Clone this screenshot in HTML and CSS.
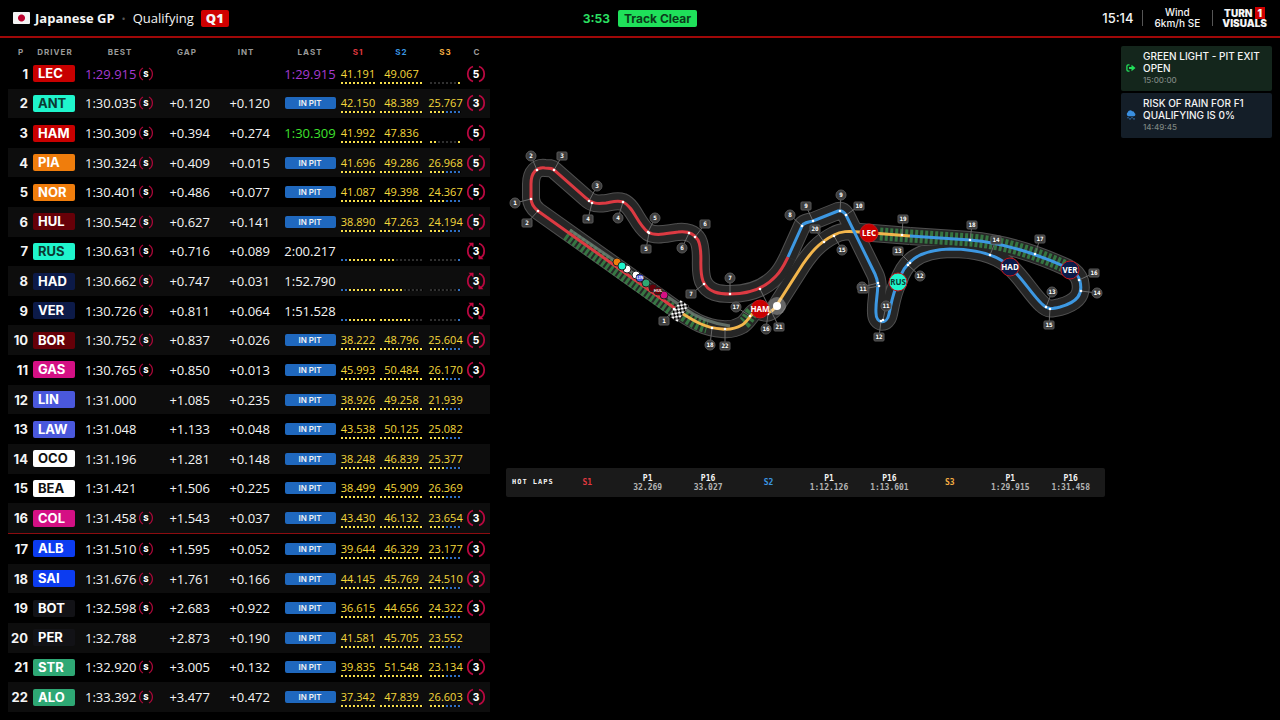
FILE: index.html
```
<!DOCTYPE html>
<html lang="en">
  <head>
    <meta charset="UTF-8" />
    <meta name="viewport" content="width=device-width, initial-scale=1.0" />
    <title>Japanese GP - Qualifying</title>
    <link rel="stylesheet" href="styles.css">
  </head>
  <body>
    <header class="topbar">
      <div class="session">
        <span class="flag"></span>
        <h1>Japanese GP</h1>
        <span class="dot">•</span>
        <span class="session-name">Qualifying</span>
        <span class="segment">Q1</span>
      </div>
      <div class="track-status">
        <span class="clock">3:53</span>
        <span class="status">Track Clear</span>
      </div>
      <div class="info">
        <span class="local-time">15:14</span>
        <div class="wind"><span>Wind</span><span>6km/h SE</span></div>
        <div class="logo">
          <span>TURN <b>1</b></span>
          <span>VISUALS</span>
        </div>
      </div>
    </header>

    <div class="layout">
      <table class="timing">
        <colgroup>
          <col class="col-pos"><col class="col-driver"><col class="col-best">
          <col class="col-gap"><col class="col-int"><col class="col-last">
          <col class="col-s1"><col class="col-s2"><col class="col-s3"><col class="col-tyre">
        </colgroup>
        <thead>
          <tr>
            <th class="pos">P</th>
            <th>DRIVER</th>
            <th>BEST</th>
            <th>GAP</th>
            <th>INT</th>
            <th class="last">LAST</th>
            <th class="s1">S1</th>
            <th class="s2">S2</th>
            <th class="s3">S3</th>
            <th class="tyre">C</th>
          </tr>
        </thead>
        <tbody id="timing-rows"></tbody>
      </table>

      <main class="center">
        <svg class="map" viewBox="506 46 599 422" role="img" aria-label="Track map">
          <defs>
            <pattern id="checker" width="5" height="5" patternUnits="userSpaceOnUse">
              <rect width="5" height="5" fill="#000" />
              <rect width="2.5" height="2.5" fill="#fff" />
              <rect x="2.5" y="2.5" width="2.5" height="2.5" fill="#fff" />
            </pattern>
            <path id="sector1" d="M680 312 L538 211 C533 207 531 203 531 198 V184 C531 172 537 167 545 168 C549 168 552 168 554 170 L586 198 C592 204 598 204 606 203 C612 202 617 200 623 202 C634 207 637 224 648 232 C656 237 668 233 678 232 C686 231 694 233 698 240 C704 252 698 268 703 281 C708 293 720 294 730 294 C750 294 765 288 776 276 C782 270 785 263 788 257" />
            <path id="sector2" d="M788 257 L802 226 C803 223 808 222 813 221 L838 211 C842 210 844 212 846 215 L875 274 C881 286 875 298 876 313 C876 324 887 325 889 314 C892 300 893 292 898 283 C904 262 918 250 950 249 C975 249 995 254 1008 265 C1022 277 1032 295 1042 304 C1048 310 1052 309 1060 307 C1078 302 1083 294 1080 281 C1078 274 1072 270 1068 268 C1035 253 1005 243 970 240 L910 236" />
            <path id="sector3" d="M910 236 L860 232 C848 231 841 231 834 235 C818 243 810 254 803 264 L780 300 C775 309 770 316 760 311 C752 309 750 320 742 325 C735 329 730 330 722 329 C705 328 694 321 680 312" />
          </defs>
          <g class="road-edge">
            <use href="#sector1" /><use href="#sector2" /><use href="#sector3" />
          </g>
          <g class="road">
            <use href="#sector1" /><use href="#sector2" /><use href="#sector3" />
          </g>
          <g class="drs">
            <path d="M567 234 L674 311" />
            <path d="M684 315 C692 321 699 325 707 327" />
            <path d="M744 323 C750 318 750 309 760 310" />
            <path d="M880 234 L970 240 C1005 243 1035 253 1064 266" />
          </g>
          <g class="pit-lane">
            <path d="M570 230 L684 308 C697 318 710 323 730 326" />
          </g>
          <g class="racing-line">
            <use class="line-s1" href="#sector1" />
            <use class="line-s3" href="#sector3" />
            <use class="line-s2" href="#sector2" />
          </g>
          <rect x="-5" y="-10" width="10" height="20" fill="url(#checker)" transform="translate(679 311) rotate(35)" />
          <g id="markers"></g>
          <g id="cars"></g>
        </svg>

        <section class="hot-laps">
          <h2>HOT LAPS</h2>
          <span class="s1">S1</span>
          <div><b>P1</b><span>32.269</span></div>
          <div><b>P16</b><span>33.027</span></div>
          <span class="s2">S2</span>
          <div><b>P1</b><span>1:12.126</span></div>
          <div><b>P16</b><span>1:13.601</span></div>
          <span class="s3">S3</span>
          <div><b>P1</b><span>1:29.915</span></div>
          <div><b>P16</b><span>1:31.458</span></div>
        </section>
      </main>

      <aside class="messages">
        <article class="message green">
          <svg viewBox="0 0 10 8">
            <path d="M3.500 .8H2.300Q.9.800.9 2.200V5.800Q.9 7.200 2.300 7.200H3.500" fill="none" stroke="#22e05a" stroke-width="1.300" />
            <path d="M3 2.900H5.500V.8L9.500 4L5.500 7.200V5.100H3Z" fill="#22e05a" />
          </svg>
          <div>
            <p>GREEN LIGHT - PIT EXIT OPEN</p>
            <time>15:00:00</time>
          </div>
        </article>
        <article class="message blue">
          <svg viewBox="0 0 10 10">
            <path d="M2.500 6.200A2.200 2.200 0 0 1 1.800 2.200A2.500 2.500 0 0 1 6.200 1.300A2 2 0 0 1 8.500 3A1.700 1.700 0 0 1 8 6.200Z" fill="#3a8fe0" />
            <path d="M2 7.300V8.200M4 8.300V9.500M6 7.300V8.200M8 8.300V9.500" stroke="#3a8fe0" stroke-width="1.200" />
          </svg>
          <div>
            <p>RISK OF RAIN FOR F1 QUALIFYING IS 0%</p>
            <time>14:49:45</time>
          </div>
        </article>
      </aside>
    </div>
    <script src="script.js"></script>
  </body>
</html>
```
FILE: styles.css
```
* {
  box-sizing: border-box;
}

body {
  margin: 0;
  min-height: 100vh;
  background: #000;
  color: #f4f4f4;
  font-family: Inter, "Liberation Sans", sans-serif;
  font-size: 13px;
}

h1,
h2,
p {
  margin: 0;
}

.s1 {
  color: #e0383f;
}

.s2 {
  color: #3a96e0;
}

.s3 {
  color: #f5ad42;
}

/* top bar */
.topbar {
  display: grid;
  grid-template-columns: 1fr auto 1fr;
  align-items: center;
  height: 38px;
  padding: 0 13px;
  border-bottom: 2px solid #a00808;
}

.session,
.track-status,
.info {
  display: flex;
  align-items: center;
}

.session {
  font-family: "Open Sans", "Noto Sans", sans-serif;
}

.flag {
  width: 17px;
  height: 12px;
  margin-right: 5px;
  border-radius: 1px;
  background: radial-gradient(circle, #bc002d 3px, #f4f4f4 4px);
}

.session h1 {
  font-size: 13px;
  font-weight: 700;
}

.dot {
  margin: 0 7px;
  color: #555;
  font-size: 11px;
}

.session-name {
  font-weight: 500;
}

.segment {
  margin-left: 7px;
  padding: 0 5px;
  border-radius: 2px;
  background: #d00000;
  font-weight: 800;
  line-height: 17px;
}

.track-status {
  gap: 8px;
  font-size: 12px;
  font-weight: 700;
}

.clock {
  color: #2ade60;
}

.status {
  padding: 0 6px;
  border-radius: 2px;
  background: #1fe05a;
  color: #0b3a1a;
  line-height: 17px;
}

.info {
  justify-content: flex-end;
}

.local-time {
  padding-right: 8px;
  font-weight: 500;
}

.wind {
  display: flex;
  flex-direction: column;
  justify-content: center;
  height: 16px;
  padding: 0 12px;
  border: solid #555;
  border-width: 0 1px;
  font-size: 10px;
  font-weight: 500;
  line-height: 11px;
  text-align: center;
}

.logo {
  display: flex;
  flex-direction: column;
  align-items: center;
  padding-left: 9px;
  font-size: 10px;
  font-weight: 900;
  line-height: 10px;
}

.logo b {
  padding: 0 3px;
  background: #d00000;
}

/* main layout */
.layout {
  display: grid;
  grid-template-columns: 482px 1fr 151px;
  gap: 16px;
  padding: 8px;
  align-items: start;
}

.timing {
  width: 100%;
  height: calc(100vh - 54px);
  border-collapse: collapse;
  table-layout: fixed;
  font-family: "Open Sans", "Noto Sans", sans-serif;
  font-size: 13px;
  font-weight: 500;
}

.col-pos { width: 22px; }
.col-driver { width: 48px; }
.col-best { width: 82px; }
.col-gap { width: 52px; }
.col-int { width: 66px; }
.col-last { width: 60px; }
.col-s1 { width: 40px; }
.col-s2 { width: 47px; }
.col-s3 { width: 41px; }
.col-tyre { width: 24px; }

.timing th {
  height: 13px;
  padding: 0 0 0 2px;
  color: #9a9a9a;
  font-family: Inter, sans-serif;
  font-size: 8px;
  font-weight: 700;
  letter-spacing: 1px;
  line-height: 13px;
}

.timing th.pos { padding-left: 4px; }
.timing th.last { padding-left: 4px; }
.timing th.s1 { color: #e0383f; padding: 0; }
.timing th.s2 { color: #3a96e0; padding: 0; }
.timing th.s3 { color: #f5ad42; padding: 0; }

.timing td {
  padding: 0;
  line-height: 16px;
}

.timing tbody tr:nth-child(even) {
  background: #0d0d0d;
}

.timing tbody tr.cutoff td {
  border-bottom: 1px solid #8c0c10;
}

.timing td.pos {
  padding-right: 2px;
  font-family: Inter, sans-serif;
  font-weight: 700;
  text-align: right;
}

.driver {
  display: block;
  width: 42px;
  margin-left: 3px;
  padding-left: 5px;
  border-radius: 2px;
  font-family: Inter, sans-serif;
  font-weight: 700;
  line-height: 17px;
}

.best {
  display: flex;
  align-items: center;
  gap: 2px;
  padding-left: 7px;
}

.compound {
  flex: none;
  width: 16px;
  height: 16px;
}

.timing td.gap,
.timing td.int {
  text-align: right;
  padding-right: 2px;
}

.timing td.int {
  padding-right: 8px;
}

.timing td.last {
  padding-left: 4px;
  text-align: center;
}

.overall { color: #a53ad0; }
.personal { color: #3fe02e; }

.in-pit {
  display: block;
  width: 51px;
  margin: 0 auto;
  border-radius: 2px;
  background: #1f68be;
  font-family: Inter, sans-serif;
  font-size: 8px;
  font-weight: 600;
  line-height: 12px;
}

.sector {
  display: flex;
  flex-direction: column;
  align-items: center;
  padding-top: 2px;
  color: #f5d93c;
  font-size: 11px;
}

.sector span {
  height: 16px;
}

.minis {
  display: flex;
  gap: 1px;
}

.minis i {
  width: 3px;
  height: 2px;
  border-right: 1px solid #000;
  background: #303030;
}

.minis .y { background: #f5dc4a; }
.minis .b { background: #2f6fc4; }

.timing .tyre {
  padding-right: 4px;
}

.laps {
  display: block;
  width: 20px;
  height: 20px;
}

.compound text,
.laps text {
  font-family: Inter, sans-serif;
}

/* map */
.center {
  min-width: 0;
}

.map {
  display: block;
  width: 100%;
  font-family: "DejaVu Sans Mono", monospace;
  font-weight: 700;
  text-anchor: middle;
}

.map path,
.map use {
  fill: none;
}

.road-edge { stroke: #505050; stroke-width: 18; }
.road { stroke: #262626; stroke-width: 16; }
.drs { stroke: #3a8a4a; stroke-width: 13; stroke-dasharray: 3 2; opacity: 0.8; }
.pit-lane { stroke: #6f7f76; stroke-width: 3; opacity: 0.8; }
.racing-line { stroke-width: 3; }
.line-s1 { stroke: #dc3a42; }
.line-s2 { stroke: #3d98e2; }
.line-s3 { stroke: #f3b64c; }

.marker line { stroke: #6a6a6a; }
.marker .label { fill: #3d3d3d; stroke: #585858; }
.marker text { fill: #fff; font-size: 6px; }
.marker .anchor { fill: #fff; }

.car text {
  font-family: "Noto Sans", sans-serif;
  font-size: 8px;
}

.car.parked text { font-size: 4px; }

/* hot laps */
.hot-laps {
  display: flex;
  align-items: center;
  height: 29px;
  padding: 0 4px 0 6px;
  border-radius: 2px;
  background: #1a1a1a;
  font-family: "DejaVu Sans Mono", monospace;
  font-size: 8px;
  font-weight: 700;
  line-height: 9px;
  text-align: center;
}

.hot-laps h2 {
  width: 45px;
  font-size: 7px;
  letter-spacing: 1px;
  text-align: left;
  white-space: nowrap;
}

.hot-laps > span,
.hot-laps > div {
  flex: 1;
}

.hot-laps div {
  display: flex;
  flex-direction: column;
}

.hot-laps div span {
  color: #b4b4b4;
}

/* race control */
.messages {
  display: flex;
  flex-direction: column;
  gap: 2px;
}

.message {
  display: flex;
  align-items: center;
  gap: 7px;
  padding: 4px 5px 5px;
  border-radius: 2px;
  font-size: 10px;
  font-weight: 500;
  line-height: 12px;
}

.message.green { background: #14261c; }
.message.blue { background: #141e28; }

.message svg {
  flex: none;
  width: 10px;
}

.message time {
  display: block;
  color: #7d8580;
  font-size: 8px;
}
```
FILE: script.js
```
const teams = {
  ferrari: ["#c80000", "#fff"],
  mercedes: ["#1ff5cc", "#0b3a32"],
  mclaren: ["#f07d0c", "#fff"],
  audi: ["#660008", "#fff"],
  redbull: ["#0c1a48", "#fff"],
  alpine: ["#d41084", "#fff"],
  rb: ["#4a58dc", "#fff"],
  haas: ["#fff", "#111"],
  williams: ["#0c3cf0", "#fff"],
  cadillac: ["#121216", "#fff"],
  aston: ["#2ea874", "#fff"],
};

// code, team, best, on softs, gap, int, last, s1, s2, s3, laps
const drivers = [
  ["LEC", "ferrari", "1:29.915", 1, "", "", "1:29.915", "41.191", "49.067", "", 5],
  ["ANT", "mercedes", "1:30.035", 1, "+0.120", "+0.120", "PIT", "42.150", "48.389", "25.767", 3],
  ["HAM", "ferrari", "1:30.309", 1, "+0.394", "+0.274", "1:30.309", "41.992", "47.836", "", 5],
  ["PIA", "mclaren", "1:30.324", 1, "+0.409", "+0.015", "PIT", "41.696", "49.286", "26.968", 5],
  ["NOR", "mclaren", "1:30.401", 1, "+0.486", "+0.077", "PIT", "41.087", "49.398", "24.367", 5],
  ["HUL", "audi", "1:30.542", 1, "+0.627", "+0.141", "PIT", "38.890", "47.263", "24.194", 5],
  ["RUS", "mercedes", "1:30.631", 1, "+0.716", "+0.089", "2:00.217", "", "", "", 3],
  ["HAD", "redbull", "1:30.662", 1, "+0.747", "+0.031", "1:52.790", "", "", "", 3],
  ["VER", "redbull", "1:30.726", 1, "+0.811", "+0.064", "1:51.528", "", "", "", 3],
  ["BOR", "audi", "1:30.752", 1, "+0.837", "+0.026", "PIT", "38.222", "48.796", "25.604", 5],
  ["GAS", "alpine", "1:30.765", 1, "+0.850", "+0.013", "PIT", "45.993", "50.484", "26.170", 3],
  ["LIN", "rb", "1:31.000", 0, "+1.085", "+0.235", "PIT", "38.926", "49.258", "21.939", 0],
  ["LAW", "rb", "1:31.048", 0, "+1.133", "+0.048", "PIT", "43.538", "50.125", "25.082", 0],
  ["OCO", "haas", "1:31.196", 0, "+1.281", "+0.148", "PIT", "38.248", "46.839", "25.377", 0],
  ["BEA", "haas", "1:31.421", 0, "+1.506", "+0.225", "PIT", "38.499", "45.909", "26.369", 0],
  ["COL", "alpine", "1:31.458", 1, "+1.543", "+0.037", "PIT", "43.430", "46.132", "23.654", 3],
  ["ALB", "williams", "1:31.510", 1, "+1.595", "+0.052", "PIT", "39.644", "46.329", "23.177", 3],
  ["SAI", "williams", "1:31.676", 1, "+1.761", "+0.166", "PIT", "44.145", "45.769", "24.510", 3],
  ["BOT", "cadillac", "1:32.598", 1, "+2.683", "+0.922", "PIT", "36.615", "44.656", "24.322", 3],
  ["PER", "cadillac", "1:32.788", 0, "+2.873", "+0.190", "PIT", "41.581", "45.705", "23.552", 0],
  ["STR", "aston", "1:32.920", 1, "+3.005", "+0.132", "PIT", "39.835", "51.548", "23.134", 3],
  ["ALO", "aston", "1:33.392", 1, "+3.477", "+0.472", "PIT", "37.342", "47.839", "26.603", 3],
];

// mini sectors: y = yellow, b = blue, n = not set
const defaultMinis = ["yyyyyyyyy", "yyyyyyyyyyy", "yyyybbbb"];
const minis = {
  LEC: ["yyyyyyyyy", "yyyyyyyyyyy", "nnnnnnny"],
  HAM: ["yyyyyyyyy", "yyyyyyyyyyy", "yynnnnny"],
  RUS: ["bbyyyyyyy", "yyyynnnnnnn", "nnnnnnnb"],
  HAD: ["bbyyyyyyy", "yyyyyynnnnn", "nnnnnnnb"],
  VER: ["bbyyyyyyy", "yyyyyyyynnn", "nnnnnnnb"],
};
const onTrack = ["RUS", "HAD", "VER"];

function compoundIcon() {
  return `<svg class="compound" viewBox="0 0 16 16"><path d="M5 2A7 7 0 0 0 5 14M11 2A7 7 0 0 1 11 14" fill="none" stroke="#a80838" stroke-width="1.3"/><text x="8" y="11" text-anchor="middle" font-size="8" font-weight="800" fill="#fff">S</text></svg>`;
}

function lapsIcon(laps, rolling) {
  const arrows = rolling
    ? `<path d="M2.500 1.800H7.500V6.500ZM17.500 18.200H12.500V13.500Z" fill="#c00840"/>`
    : "";
  return `<svg class="laps" viewBox="0 0 20 20"><path d="M7 2.500A8 8 0 0 0 7 17.500M13 2.500A8 8 0 0 1 13 17.500" fill="none" stroke="#b80840" stroke-width="1.8"/>${arrows}<text x="10" y="14" text-anchor="middle" font-size="10" font-weight="800" fill="#fff">${laps}</text></svg>`;
}

function sectorCell(time, segments) {
  const dots = [...segments].map((s) => `<i class="${s}"></i>`).join("");
  return `<td><div class="sector"><span>${time}</span><div class="minis">${dots}</div></div></td>`;
}

function lastCell(last, position) {
  if (last === "PIT") return `<span class="in-pit">IN PIT</span>`;
  const pace = position === 1 ? "overall" : position === 3 ? "personal" : "";
  return `<span class="${pace}">${last}</span>`;
}

document.getElementById("timing-rows").innerHTML = drivers
  .map((driver, i) => {
    const [code, team, best, soft, gap, int, last, s1, s2, s3, laps] = driver;
    const [background, color] = teams[team];
    const segments = minis[code] || defaultMinis;
    return `<tr class="${i === 15 ? "cutoff" : ""}">
      <td class="pos">${i + 1}</td>
      <td><span class="driver" style="background:${background};color:${color}">${code}</span></td>
      <td><div class="best"><span class="${i === 0 ? "overall" : ""}">${best}</span>${soft ? compoundIcon() : ""}</div></td>
      <td class="gap">${gap}</td>
      <td class="int">${int}</td>
      <td class="last">${lastCell(last, i + 1)}</td>
      ${sectorCell(s1, segments[0])}
      ${sectorCell(s2, segments[1])}
      ${sectorCell(s3, segments[2])}
      <td class="tyre">${laps ? lapsIcon(laps, onTrack.includes(code)) : ""}</td>
    </tr>`;
  })
  .join("");

// shape (c = corner, s = marshal sector), number, label x/y, anchor x/y
const markers = [
  ["c", 1, 515, 203, 531, 199], ["c", 2, 531, 156, 537, 170], ["s", 3, 562, 156, 554, 170],
  ["s", 2, 527, 223, 538, 211], ["c", 3, 597, 186, 589, 201], ["s", 4, 588, 219, 592, 203],
  ["c", 4, 618, 218, 623, 202], ["c", 5, 655, 218, 648, 232], ["s", 5, 646, 249, 649, 233],
  ["s", 6, 705, 224, 695, 237], ["c", 6, 682, 248, 689, 233], ["s", 7, 691, 294, 704, 284],
  ["s", 1, 664, 321, 674, 309], ["c", 7, 730, 278, 730, 294], ["c", 8, 790, 215, 802, 226],
  ["s", 9, 806, 206, 813, 221], ["c", 9, 841, 195, 840, 211], ["s", 10, 859, 206, 846, 215],
  ["s", 20, 815, 229, 824, 242], ["c", 15, 842, 250, 834, 236], ["c", 10, 862, 287, 878, 283],
  ["s", 11, 863, 289, 879, 286], ["c", 11, 886, 306, 883, 320], ["s", 12, 879, 337, 881, 321],
  ["s", 13, 898, 251, 910, 263], ["c", 12, 920, 276, 908, 265], ["s", 14, 996, 240, 990, 255],
  ["s", 18, 972, 225, 970, 240], ["s", 19, 903, 219, 902, 235], ["s", 17, 1040, 239, 1035, 254],
  ["s", 16, 1094, 273, 1079, 280], ["c", 14, 1097, 293, 1081, 291], ["c", 13, 1052, 292, 1046, 307],
  ["s", 15, 1049, 325, 1050, 309], ["c", 17, 736, 307, 750, 316], ["c", 16, 766, 329, 768, 314],
  ["s", 21, 779, 327, 760, 289], ["c", 18, 710, 345, 712, 328], ["s", 22, 725, 346, 725, 329],
];

document.getElementById("markers").innerHTML = markers
  .map(([shape, number, x, y, ax, ay]) => {
    const label =
      shape === "c"
        ? `<circle class="label" cx="${x}" cy="${y}" r="5"/>`
        : `<rect class="label" x="${x - 5}" y="${y - 4}" width="10" height="8" rx="1"/>`;
    return `<g class="marker"><line x1="${x}" y1="${y}" x2="${ax}" y2="${ay}"/><circle class="anchor" cx="${ax}" cy="${ay}" r="1.3"/>${label}<text x="${x}" y="${y + 2}">${number}</text></g>`;
  })
  .join("");

// label, team, x, y, parked in the pit lane
const cars = [
  ["", "mclaren", 617, 262, true], ["", "haas", 627, 269, true], ["", "mercedes", 622, 266, true],
  ["", "haas", 636, 275, true], ["", "aston", 646, 283, true], ["LIN", "rb", 640, 278, true],
  ["", "alpine", 664, 295, true], ["", "audi", 653, 288, true], ["HUL", "audi", 658, 291, true],
  ["HAM", "ferrari", 760, 309], ["LEC", "ferrari", 869, 233], ["RUS", "mercedes", 898, 282],
  ["HAD", "redbull", 1010, 267], ["VER", "redbull", 1070, 270],
];

const safetyCar = `<circle cx="777" cy="306" r="9" fill="#fff" opacity="0.3"/><circle cx="777" cy="306" r="4" fill="#fff"/>`;

document.getElementById("cars").innerHTML =
  safetyCar +
  cars
    .map(([label, team, x, y, parked]) => {
      const [background, color] = teams[team];
      return `<g class="car ${parked ? "parked" : ""}"><circle cx="${x}" cy="${y}" r="${parked ? 4 : 9}" fill="${background}" stroke="${parked ? "#222" : "#c4141c"}"/><text x="${x}" y="${y + (parked ? 1 : 3)}" fill="${color}">${label}</text></g>`;
    })
    .join("");
```
